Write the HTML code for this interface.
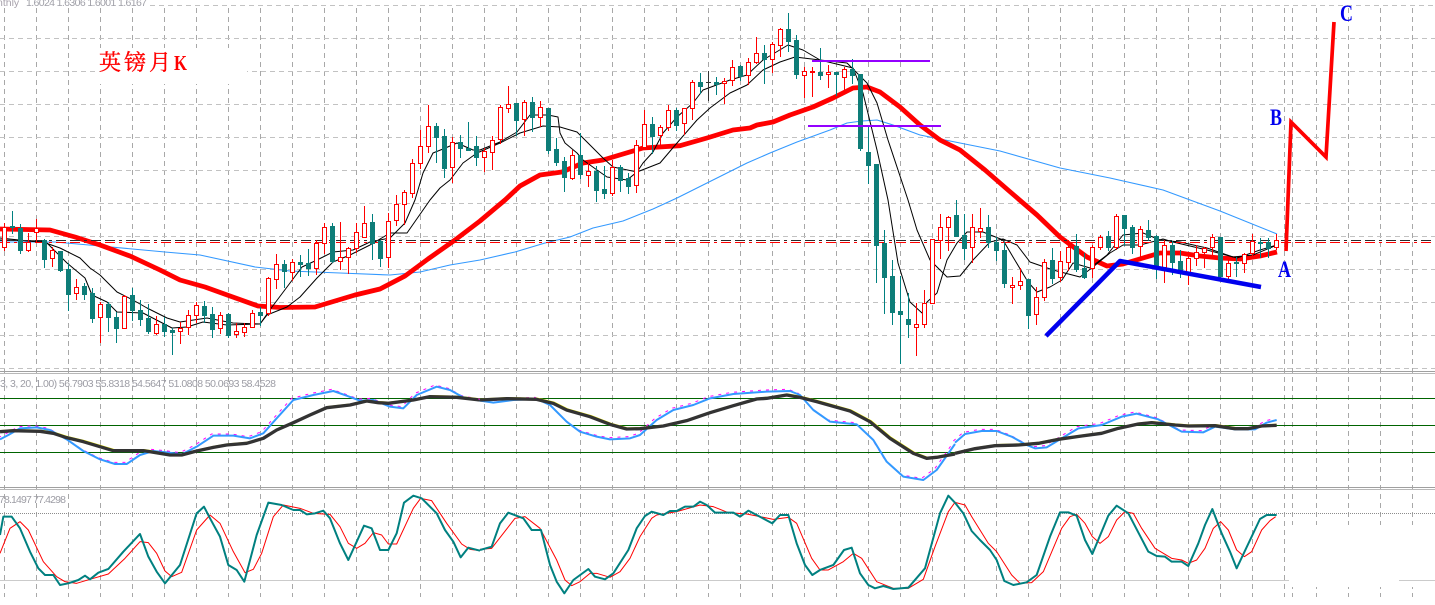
<!DOCTYPE html>
<html lang="zh">
<head>
<meta charset="utf-8">
<title>英镑月K</title>
<style>
html,body{margin:0;padding:0;background:#fff;width:1435px;height:605px;overflow:hidden}
svg{display:block}
text{font-family:"Liberation Sans","Noto Sans CJK SC",sans-serif}
</style>
</head>
<body>
<svg xmlns="http://www.w3.org/2000/svg" width="1435" height="605" viewBox="0 0 1435 605">
<defs>
<pattern id="d" width="2" height="2" patternUnits="userSpaceOnUse">
<rect width="2" height="2" fill="#008080"/>
<rect width="1" height="1" fill="#1c7a70"/>
<rect x="1" y="1" width="1" height="1" fill="#1c7a70"/>
</pattern>
</defs>
<rect width="1435" height="605" fill="#fff"/>

<!-- grid -->
<g fill="none" shape-rendering="crispEdges">
<path stroke="#a8a8a8" stroke-dasharray="5 4" d="M4.500 8V597M36.500 8V597M68.500 8V597M100.500 8V597M132.500 8V597M164.500 8V597M196.500 8V597M228.500 8V597M260.500 8V597M292.500 8V597M324.500 8V597M356.500 8V597M388.500 8V597M420.500 8V597M452.500 8V597M484.500 8V597M516.500 8V597M548.500 8V597M580.500 8V597M612.500 8V597M644.500 8V597M676.500 8V597M708.500 8V597M740.500 8V597M772.500 8V597M804.500 8V597M836.500 8V597M868.500 8V597M900.500 8V597M932.500 8V597M964.500 8V597M996.500 8V597M1028.500 8V597M1060.500 8V597M1092.500 8V597M1124.500 8V597M1156.500 8V597M1188.500 8V597M1220.500 8V597M1252.500 8V597M1284.500 8V597M1292.500 8V597M1316.500 8V597M1348.500 8V597M1380.500 8V597M1412.500 8V597"/>
<path stroke="#c2c2c2" stroke-dasharray="5 4" d="M150 5.500H1435M0 38.500H1435M0 71.500H1435M0 104.500H1435M0 137.500H1435M0 170.500H1435M0 203.500H1435M0 236.500H1435M0 269.500H1435M0 302.500H1435M0 335.500H1435M0 368.500H1435"/>
</g>
<rect x="100" y="48" width="147" height="36" fill="#fff"/>
<rect x="1289" y="525" width="146" height="62" fill="#fff"/>

<!-- pane separators -->
<g shape-rendering="crispEdges">
<rect x="0" y="371" width="1435" height="1" fill="#a0a0a0"/>
<rect x="0" y="373" width="1435" height="1" fill="#b8b8b8"/>
<rect x="0" y="487" width="1435" height="1" fill="#a0a0a0"/>
<rect x="0" y="489" width="1435" height="1" fill="#b8b8b8"/>
<path stroke="#006400" d="M0 398.500H1435M0 425.500H1435M0 452.500H1435"/>
<path stroke="#8c8c8c" stroke-dasharray="1 1" d="M0 513.500H1435"/>
<path stroke="#cbcbcb" d="M0 580.500H1289M1399 580.500H1435"/>
</g>

<!-- labels -->
<text x="-3" y="6" font-size="10.500" fill="#a8a2ac">nthly</text>
<text x="26" y="6" font-size="10.500" fill="#a0a0a8" textLength="121" lengthAdjust="spacing">1.6024 1.6306 1.6001 1.6167</text>
<text x="0" y="387" font-size="10.500" fill="#9c9ca4" textLength="276" lengthAdjust="spacing">3, 3, 20, 1.00) 56.7903 55.8318 54.5647 51.0808 50.0693 58.4528</text>
<text x="-1" y="503" font-size="10.500" fill="#9c9ca4" textLength="67" lengthAdjust="spacing">78.1497 77.4298</text>

<!-- blue MA -->
<path fill="none" stroke="#3399ff" stroke-width="1.100" stroke-linejoin="round" d="M0 242L55 242 100 246 165 252 200 255 255 267 290 271 340 273 390 275 420 272 450 265 480 260 515 252 545 243 570 237 593 228 623 221 653 209 677 198 713 180 747 163 770 153 797 142 830 130 847 123 862 121 877 120 893 125 920 135 960 143 1000 151 1060 168 1110 178 1163 190 1220 211 1277 234"/>

<!-- thick red MA -->
<path fill="none" stroke="#ff0000" stroke-width="4.800" stroke-linejoin="round" d="M0 229L50 230 75 237 100 245 130 256 160 270 180 280 205 287 230 296 258 306 280 307.500 315 307 335 301 355 295 380 289 405 276 428 259 455 240 480 221 505 200 520 186 540 175 562 172 583 163 603 160 613 157 643 148 680 145.700 707 138 733 130 750 128 757 125 773 122 790 115 813 107 833 98 853 88 867 87 880 92 900 107 920 125 940 140 960 150 985 170 1008 190 1037 215 1060 237 1087 257 1107 266 1123 264 1143 258 1160 253 1180 253 1200 256 1220 258 1240 259 1260 256 1277 252"/>

<!-- black MAs -->
<g fill="none" stroke="#000" stroke-width="1" stroke-linejoin="round">
<path d="M0 240L40 241 60 248 80 258 90 268 100 275 117 292 133 300 147 308 167 318 180 322 207 318 233 323 260 324 272 307 287 287 302 267 317 260 333 252 353 250 370 242 390 238 405 223 415 200 423 173 433 153 443 149 457 143 473 150 480 150 500 142 517 132 530 115 548 115 558 117 560 133 565 143 577 153 583 160 597 170 607 177 627 180 637 172 643 163 653 152 663 133 677 117 693 103 703 90 730 80 747 75 763 60 788 45 803 50 820 60 853 68 863 93 877 150 888 200 898 263 910 302 922 313 927 302 937 293 947 260 957 243 967 232 983 232 1003 240 1013 257 1028 282 1037 292 1050 287 1062 280 1073 263 1090 268 1107 255 1123 235 1143 233 1160 240 1180 242 1207 248 1233 257 1253 255 1277 245"/>
<path d="M0 238L47 243 67 263 85 278 92 295 107 302 117 312 143 313 172 328 187 327 203 322 227 325 260 324 267 315 287 307 300 297 317 278 333 262 350 255 370 245 390 233 407 233 430 200 440 188 450 180 463 163 477 153 500 143 520 133 543 126 560 127 577 132 587 142 603 158 613 167 637 172 660 163 677 143 697 120 710 108 730 93 747 85 763 70 780 62 795 57 820 60 847 63 867 83 877 103 888 140 908 200 917 230 930 260 947 277 960 276 973 260 990 242 1003 239 1017 245 1030 262 1053 270 1080 277 1093 267 1110 253 1123 245 1140 245 1163 239 1173 242 1207 250 1237 258 1260 250 1277 245"/>
</g>

<!-- dash-dot levels -->
<g fill="none" shape-rendering="crispEdges" stroke-dasharray="10 4 3 4 10 4">
<path stroke="#2a2a2a" d="M0 240.500H1435"/>
<path stroke="#ff0000" d="M0 242.500H1435"/>
</g>

<!-- candles -->
<g fill="none" shape-rendering="crispEdges">
<path stroke="#008080" d="M12.500 211V234M20.500 224V254M44.500 239V268M60.500 251V272M68.500 263V311M84.500 283V300M92.500 288V323M108.500 302V332M116.500 312V343M132.500 288V321M140.500 300V326M148.500 304V334M164.500 317V337M172.500 328V355M204.500 301V323M212.500 307V338M228.500 313V338M260.500 307V326M284.500 260V288M300.500 255V277M308.500 249V276M332.500 223V263M372.500 214V260M380.500 240V267M436.500 123V163M444.500 129V178M460.500 135V158M468.500 122V151M476.500 136V166M516.500 103V136M532.500 97V132M548.500 108V154M556.500 138V166M564.500 157V192M580.500 133V179M596.500 166V202M604.500 166V199M620.500 165V192M628.500 173V194M652.500 117V154M676.500 108V131M700.500 73V94M716.500 77V95M740.500 65V81M764.500 45V84M788.500 13V52M796.500 35V79M820.500 48V80M836.500 72V96M852.500 59V84M860.500 74V151M868.500 126V184M876.500 164V283M884.500 230V314M892.500 260V325M900.500 276V364M908.500 293V338M956.500 200V237M964.500 214V260M988.500 215V248M996.500 237V261M1004.500 242V288M1028.500 279V329M1052.500 248V284M1076.500 234V272M1084.500 253V279M1108.500 231V251M1124.500 215V246M1132.500 225V254M1148.500 220V241M1156.500 235V279M1172.500 241V275M1180.500 250V278M1220.500 237V278M1236.500 257V277M1260.500 238V258M1268.500 238V258"/>
<path stroke="#333" d="M708.500 71V101M706 82.500H711"/>
<path fill="url(#d)" d="M10 226h5V228h-5zM18 228h5V251h-5zM42 240h5V260h-5zM58 251h5V271h-5zM66 269h5V295h-5zM82 286h5V295h-5zM90 293h5V319h-5zM106 304h5V318h-5zM114 317h5V329h-5zM130 295h5V311h-5zM138 310h5V320h-5zM146 318h5V332h-5zM162 324h5V332h-5zM170 330h5V333h-5zM202 306h5V316h-5zM210 314h5V330h-5zM226 314h5V336h-5zM258 312h5V316h-5zM282 264h5V272h-5zM298 262h5V265h-5zM306 263h5V269h-5zM330 226h5V262h-5zM370 222h5V244h-5zM378 241h5V259h-5zM434 126h5V138h-5zM442 136h5V169h-5zM458 142h5V149h-5zM466 148h5V151h-5zM474 146h5V158h-5zM514 103h5V121h-5zM530 102h5V118h-5zM546 108h5V151h-5zM554 149h5V163h-5zM562 161h5V178h-5zM578 155h5V175h-5zM594 171h5V191h-5zM602 189h5V194h-5zM618 167h5V181h-5zM626 178h5V187h-5zM650 124h5V137h-5zM674 110h5V126h-5zM698 82h5V87h-5zM714 82h5V85h-5zM738 66h5V77h-5zM762 53h5V60h-5zM786 29h5V42h-5zM794 40h5V75h-5zM818 72h5V76h-5zM834 72h5V75h-5zM850 69h5V76h-5zM858 74h5V149h-5zM866 152h5V166h-5zM874 164h5V246h-5zM882 243h5V278h-5zM890 276h5V313h-5zM898 311h5V315h-5zM906 319h5V325h-5zM954 215h5V237h-5zM962 235h5V249h-5zM986 227h5V243h-5zM994 242h5V251h-5zM1002 250h5V284h-5zM1026 279h5V316h-5zM1050 260h5V279h-5zM1074 246h5V270h-5zM1082 268h5V278h-5zM1106 236h5V248h-5zM1122 215h5V229h-5zM1130 227h5V248h-5zM1146 230h5V238h-5zM1154 236h5V268h-5zM1170 245h5V263h-5zM1178 261h5V271h-5zM1218 237h5V277h-5zM1234 262h5V264h-5zM1258 242h5V244h-5zM1266 242h5V249h-5z"/>
<path stroke="#ff0000" d="M4.500 223V251M28.500 233V252M36.500 219V243M52.500 247V267M76.500 279V300M100.500 302V343M124.500 295V329M156.500 316V335M180.500 322V344M188.500 310V335M196.500 302V323M220.500 312V334M236.500 323V338M244.500 323V337M252.500 310V328M268.500 277V316M276.500 254V289M292.500 259V281M316.500 240V275M324.500 223V254M340.500 222V270M348.500 247V274M356.500 223V253M364.500 206V238M388.500 213V268M396.500 195V226M404.500 190V225M412.500 159V198M420.500 130V169M428.500 105V153M452.500 137V183M484.500 148V172M492.500 136V170M500.500 105V144M508.500 86V113M524.500 100V136M540.500 101V127M572.500 150V180M588.500 163V187M612.500 160V196M636.500 140V193M644.500 110V149M660.500 125V149M668.500 105V131M684.500 108V135M692.500 80V120M724.500 78V104M732.500 60V86M748.500 58V85M756.500 37V64M772.500 42V73M780.500 28V57M804.500 67V98M812.500 67V97M828.500 65V88M844.500 67V92M916.500 303V356M924.500 290V328M932.500 239V304M940.500 214V259M948.500 216V251M972.500 214V263M980.500 208V238M1012.500 277V304M1020.500 268V290M1036.500 287V325M1044.500 259V301M1060.500 251V282M1068.500 240V271M1092.500 245V278M1100.500 235V250M1116.500 214V250M1140.500 226V258M1164.500 240V283M1188.500 255V285M1196.500 245V266M1204.500 247V268M1212.500 234V256M1228.500 258V281M1244.500 253V273M1252.500 234V256M1276.500 234V250"/>
<path stroke="#ff0000" fill="#fff" d="M2.500 227.500h4V247.500h-4zM26.500 242.500h4V250.500h-4zM34.500 228.500h4V232.500h-4zM50.500 250.500h4V258.500h-4zM74.500 287.500h4V293.500h-4zM98.500 304.500h4V317.500h-4zM122.500 296.500h4V328.500h-4zM154.500 324.500h4V333.500h-4zM178.500 328.500h4V331.500h-4zM186.500 315.500h4V327.500h-4zM194.500 305.500h4V315.500h-4zM218.500 315.500h4V328.500h-4zM234.500 331.500h4V334.500h-4zM242.500 327.500h4V332.500h-4zM250.500 313.500h4V327.500h-4zM266.500 278.500h4V313.500h-4zM274.500 264.500h4V279.500h-4zM290.500 262.500h4V272.500h-4zM314.500 243.500h4V268.500h-4zM322.500 227.500h4V243.500h-4zM338.500 257.500h4V261.500h-4zM346.500 248.500h4V257.500h-4zM354.500 232.500h4V248.500h-4zM362.500 223.500h4V237.500h-4zM386.500 221.500h4V257.500h-4zM394.500 204.500h4V220.500h-4zM402.500 192.500h4V204.500h-4zM410.500 163.500h4V193.500h-4zM418.500 146.500h4V163.500h-4zM426.500 126.500h4V146.500h-4zM450.500 142.500h4V167.500h-4zM482.500 151.500h4V157.500h-4zM490.500 140.500h4V152.500h-4zM498.500 107.500h4V139.500h-4zM506.500 104.500h4V108.500h-4zM522.500 102.500h4V119.500h-4zM538.500 107.500h4V117.500h-4zM570.500 155.500h4V178.500h-4zM586.500 171.500h4V175.500h-4zM610.500 167.500h4V193.500h-4zM634.500 145.500h4V185.500h-4zM642.500 124.500h4V147.500h-4zM658.500 127.500h4V135.500h-4zM666.500 110.500h4V127.500h-4zM682.500 108.500h4V123.500h-4zM690.500 82.500h4V108.500h-4zM722.500 81.500h4V83.500h-4zM730.500 67.500h4V80.500h-4zM746.500 62.500h4V75.500h-4zM754.500 53.500h4V62.500h-4zM770.500 44.500h4V59.500h-4zM778.500 29.500h4V45.500h-4zM802.500 71.500h4V75.500h-4zM810.500 71.500h4V72.500h-4zM826.500 72.500h4V74.500h-4zM842.500 69.500h4V77.500h-4zM914.500 324.500h4V327.500h-4zM922.500 303.500h4V324.500h-4zM930.500 239.500h4V303.500h-4zM938.500 227.500h4V240.500h-4zM946.500 217.500h4V227.500h-4zM970.500 227.500h4V247.500h-4zM978.500 228.500h4V231.500h-4zM1010.500 285.500h4V287.500h-4zM1018.500 281.500h4V285.500h-4zM1034.500 297.500h4V314.500h-4zM1042.500 262.500h4V297.500h-4zM1058.500 261.500h4V277.500h-4zM1066.500 247.500h4V262.500h-4zM1090.500 247.500h4V268.500h-4zM1098.500 237.500h4V247.500h-4zM1114.500 216.500h4V247.500h-4zM1138.500 229.500h4V246.500h-4zM1162.500 245.500h4V267.500h-4zM1186.500 258.500h4V272.500h-4zM1194.500 252.500h4V258.500h-4zM1202.500 248.500h4V252.500h-4zM1210.500 237.500h4V247.500h-4zM1226.500 263.500h4V276.500h-4zM1242.500 254.500h4V263.500h-4zM1250.500 241.500h4V253.500h-4zM1274.500 240.500h4V247.500h-4z"/>
</g>

<!-- drawn objects -->
<g fill="none" shape-rendering="crispEdges">
<path stroke="#9400ff" stroke-width="2" d="M812 61H930M808 126H941"/>
</g>
<path fill="none" stroke="#0000ee" stroke-width="4.500" stroke-linejoin="round" d="M1046 336L1120 261 1261 287"/>
<path fill="none" stroke="#ff0000" stroke-width="3.700" stroke-linejoin="miter" d="M1286 251L1291 122 1326 157 1334 22"/>

<!-- title + wave labels -->
<text x="99" y="70" font-size="22" fill="#ff0000" stroke="#ff0000" stroke-width=".35" style="font-family:'Liberation Serif','Noto Serif CJK SC',serif" letter-spacing="3">英镑月</text>
<text x="174" y="70" font-size="21" fill="#ff0000" font-weight="700" textLength="13" lengthAdjust="spacingAndGlyphs" style="font-family:'Liberation Serif',serif">K</text>
<g font-size="23" font-weight="700" fill="#0000ee">
<text x="1278" y="277" textLength="13" lengthAdjust="spacingAndGlyphs" style="font-family:'Liberation Serif',serif">A</text>
<text x="1270" y="125" textLength="12" lengthAdjust="spacingAndGlyphs" style="font-family:'Liberation Serif',serif">B</text>
<text x="1340" y="21" textLength="13" lengthAdjust="spacingAndGlyphs" style="font-family:'Liberation Serif',serif">C</text>
</g>

<!-- pane 2 -->
<g fill="none" stroke-linejoin="round">
<g transform="translate(0,370) scale(.33333)">
<path stroke="#ff00ff" stroke-width="3" stroke-dasharray="9 15" transform="translate(-5,-5)" d="M0 208L25 195 60 175 110 172 150 180 200 208 250 243 300 268 345 282 380 282 420 255 460 243 500 247 545 253 590 230 640 197 700 197 750 205 790 190 830 145 880 90 940 75 1000 63 1040 77 1080 92 1120 90 1170 110 1210 115 1250 75 1310 50 1350 60 1390 82 1440 92"/>
<path stroke="#ffff00" stroke-width="4" transform="translate(3,-3)" d="M0 185L40 182 120 184 160 190 200 203 250 215 300 230 340 242 430 242 480 250 510 255 545 255 590 243 640 232 680 225 740 220 790 205 830 180 880 158 930 135 980 113 1050 105 1100 93 1135 98 1165 100 1240 90 1290 80 1370 82 1440 90"/>
<path stroke="#3399ff" stroke-width="6" d="M0 208L25 195 60 175 110 172 150 180 200 208 250 243 300 268 345 282 380 282 420 255 460 243 500 247 545 253 590 230 640 197 700 197 750 205 790 190 830 145 880 90 940 75 1000 63 1040 77 1080 92 1120 90 1170 110 1210 115 1250 75 1310 50 1350 60 1390 82 1440 92"/>
<path stroke="#333" stroke-width="10" d="M0 185L40 182 120 184 160 190 200 203 250 215 300 230 340 242 430 242 480 250 510 255 545 255 590 243 640 232 680 225 740 220 790 205 830 180 880 158 930 135 980 113 1050 105 1100 93 1135 98 1165 100 1240 90 1290 80 1370 82 1440 90"/>
</g>
<g transform="translate(480,370) scale(.33333)">
<path stroke="#ff00ff" stroke-width="3" stroke-dasharray="9 15" transform="translate(-5,-5)" d="M0 92L40 98 100 90 170 87 210 105 260 155 300 185 350 200 390 208 450 205 480 195 530 150 580 120 640 105 690 85 760 72 860 65 930 63 960 75 1000 120 1050 155 1130 163 1180 210 1220 275 1270 320 1330 330 1370 300 1425 222"/>
<path stroke="#ffff00" stroke-width="4" transform="translate(3,-3)" d="M0 90L80 86 170 88 220 100 260 120 330 140 390 163 440 177 480 176 550 168 620 152 690 128 760 107 830 87 860 85 920 75 960 82 1010 95 1110 123 1170 155 1230 205 1300 250 1340 265 1370 262 1425 252"/>
<path stroke="#3399ff" stroke-width="6" d="M0 92L40 98 100 90 170 87 210 105 260 155 300 185 350 200 390 208 450 205 480 195 530 150 580 120 640 105 690 85 760 72 860 65 930 63 960 75 1000 120 1050 155 1130 163 1180 210 1220 275 1270 320 1330 330 1370 300 1425 222"/>
<path stroke="#333" stroke-width="10" d="M0 90L80 86 170 88 220 100 260 120 330 140 390 163 440 177 480 176 550 168 620 152 690 128 760 107 830 87 860 85 920 75 960 82 1010 95 1110 123 1170 155 1230 205 1300 250 1340 265 1370 262 1425 252"/>
</g>
<g transform="translate(955,370) scale(.33333)">
<path stroke="#ff00ff" stroke-width="3" stroke-dasharray="9 15" transform="translate(-5,-5)" d="M0 218L30 192 80 183 125 183 170 200 215 225 240 235 275 232 320 205 370 175 440 165 500 140 545 131 610 148 680 185 745 187 780 170 840 178 900 178 935 158 965 150"/>
<path stroke="#ffff00" stroke-width="4" transform="translate(3,-3)" d="M0 250L60 236 120 227 190 225 250 220 310 208 380 198 440 190 490 175 550 162 590 158 660 165 700 168 780 167 840 176 880 176 920 168 962 166"/>
<path stroke="#3399ff" stroke-width="6" d="M0 218L30 192 80 183 125 183 170 200 215 225 240 235 275 232 320 205 370 175 440 165 500 140 545 131 610 148 680 185 745 187 780 170 840 178 900 178 935 158 965 150"/>
<path stroke="#333" stroke-width="10" d="M0 250L60 236 120 227 190 225 250 220 310 208 380 198 440 190 490 175 550 162 590 158 660 165 700 168 780 167 840 176 880 176 920 168 965 166"/>
</g>

<!-- pane 3 -->
<g transform="translate(0,370) scale(.33333)">
<path stroke="#ff0000" stroke-width="3" d="M0 550L30 475 60 455 85 480 130 575 170 620 195 635 230 640 270 628 325 612 375 565 420 515 445 518 470 550 495 603 515 620 545 607 590 480 630 435 660 460 700 545 735 608 760 598 785 550 820 440 850 405 900 415 940 430 990 433 1020 470 1045 520 1070 535 1095 520 1120 488 1145 495 1165 522 1190 522 1240 415 1262 385 1295 392 1340 460 1385 522 1410 538 1440 542"/>
<path stroke="#008080" stroke-width="6" d="M0 495L10 440 35 440 60 475 90 545 115 595 135 615 160 615 180 645 205 640 235 630 255 617 270 628 295 608 325 597 370 545 420 492 445 560 470 605 495 640 540 585 590 430 612 410 630 445 660 500 685 585 710 600 733 635 770 495 805 398 845 405 880 420 900 420 920 433 945 430 970 422 990 445 1020 520 1045 570 1092 467 1115 475 1140 540 1165 540 1190 490 1212 398 1240 377 1265 385 1310 430 1335 480 1360 515 1382 562 1405 533 1440 542"/>
</g>
<g transform="translate(480,370) scale(.33333)">
<path stroke="#ff0000" stroke-width="3" d="M0 538L35 535 105 445 135 440 180 475 230 570 255 630 275 647 300 635 330 610 350 610 390 622 420 605 450 565 480 500 515 445 530 435 590 425 660 405 700 410 745 428 800 432 880 448 925 442 950 460 995 565 1020 600 1045 600 1090 575 1120 550 1145 565 1190 635 1240 655 1285 655 1330 628 1365 530 1405 425 1425 397"/>
<path stroke="#008080" stroke-width="6" d="M0 540L35 530 60 460 85 428 130 445 155 480 183 480 210 585 230 635 253 670 280 630 325 597 345 620 375 628 400 610 445 540 470 475 495 438 515 425 550 435 570 423 590 423 615 410 640 410 660 395 680 405 705 428 760 428 780 440 805 422 830 435 877 460 900 435 925 435 950 520 975 585 997 615 1020 600 1060 585 1092 540 1115 533 1140 610 1165 645 1185 655 1210 648 1240 657 1285 653 1335 595 1380 430 1405 377 1425 398"/>
</g>
<g transform="translate(955,370) scale(.33333)">
<path stroke="#ff0000" stroke-width="3" d="M0 397L30 405 50 440 100 520 125 545 170 615 195 640 230 638 265 605 320 475 345 440 365 433 390 460 412 500 435 520 460 500 485 450 510 425 535 430 560 475 600 535 650 565 680 570 700 580 725 570 750 535 775 475 797 455 820 480 845 540 868 560 890 545 920 480 945 452 962 440"/>
<path stroke="#008080" stroke-width="6" d="M0 398L25 430 50 483 75 510 105 540 125 570 148 633 175 645 215 637 245 615 285 500 315 427 340 427 365 437 390 510 412 552 460 437 485 407 520 430 580 545 605 558 630 560 650 575 680 575 700 588 730 520 750 465 772 417 800 490 825 545 845 595 915 447 935 435 965 435"/>
</g>
</g>
</svg>
</body>
</html>
